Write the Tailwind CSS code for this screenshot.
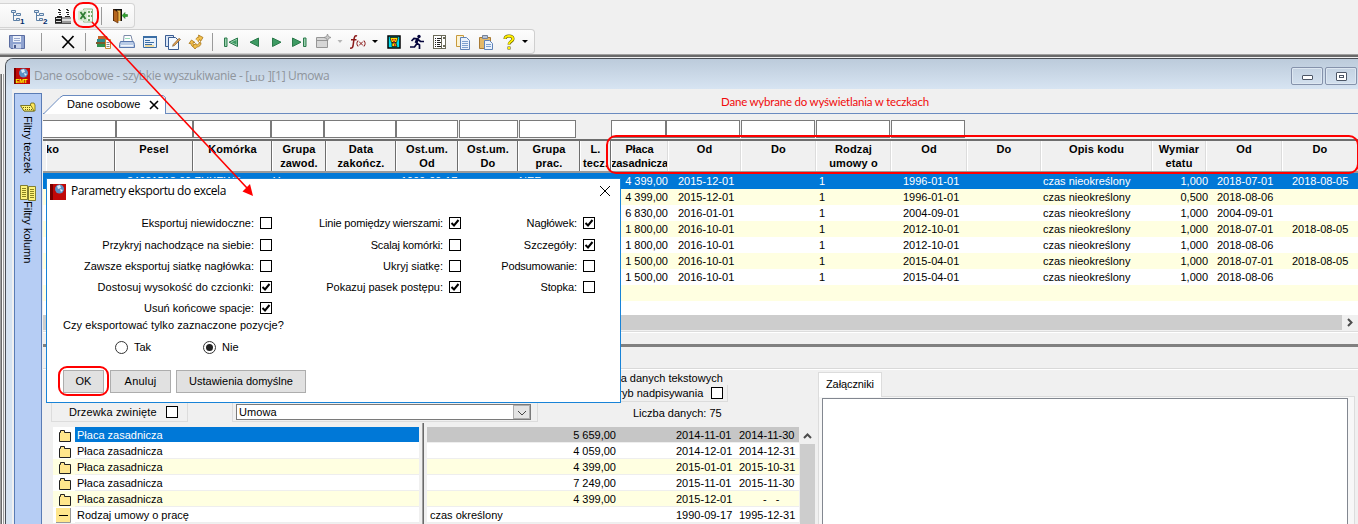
<!DOCTYPE html>
<html lang="pl">
<head>
    <meta charset="UTF-8">
    <meta name="viewport" content="width=device-width, initial-scale=1.0">
    <title>Dane osobowe - szybkie wyszukiwanie</title>
    <script src="https://cdn.jsdelivr.net/npm/@tailwindcss/browser@4"></script>
</head>
<body class="relative flex h-[524px] w-[1358px] flex-col overflow-hidden bg-[#f0f0f0] font-['Liberation_Sans',Arial,sans-serif] text-[11px] leading-4 text-black">

    <!-- Toolbars -->
    <header class="h-[54px] shrink-0 pt-[3px]">
        <div class="flex h-[25px] w-[135px] items-center rounded-r-sm border border-l-0 border-[#d4d4d4] bg-linear-to-b from-[#fdfdfd] to-[#f1f1f1] pl-[9px]">
            <svg class="h-4 w-4" viewBox="0 0 16 16" fill="none" stroke="#5b7fa6"><path d="M4.500 4v8.500H10M4.500 7.500H7"/><path d="M2.500 2.500h4v2h-4zM7.500 5.500h4v2h-4zM7.500 10.500h3v2h-3z" fill="#dce8f5"/><text x="11" y="15.500" font-size="8" font-weight="bold" fill="#002a6b" stroke="none">1</text></svg>
            <svg class="ml-[7px] h-4 w-4" viewBox="0 0 16 16" fill="none" stroke="#5b7fa6"><path d="M4.500 4v8.500H10M4.500 7.500H7"/><path d="M2.500 2.500h4v2h-4zM7.500 5.500h4v2h-4zM7.500 10.500h3v2h-3z" fill="#dce8f5"/><text x="11" y="15.500" font-size="8" font-weight="bold" fill="#002a6b" stroke="none">2</text></svg>
            <svg class="ml-[7px] h-4 w-4" viewBox="0 0 16 16" shape-rendering="crispEdges"><path fill="#fff" d="M2 0h5v9H2zM10 0h5v9h-5z"/><path fill="#222" d="M3 1h2v1H3zM4 2h2v1H4zM3 4h3v1H3zM4 6h2v1H4zM2 8h5v1H2zM11 1h2v1h-2zM12 2h2v1h-2zM11 4h3v1h-3zM12 6h2v1h-2zM10 8h5v1h-5zM0 9h7v6H0z"/><path fill="#999" d="M7 9h9v2H7zM7 13h9v2H7z"/><path fill="#ddd" d="M7 11h9v2H7zM1 10h5v1H1zM1 13h5v1H1z"/><path fill="#555" d="M0 15h16v1H0z"/></svg>
            <svg class="ml-[7px] h-4 w-4" viewBox="0 0 16 16"><path fill="#eef6ea" stroke="#8fb587" d="M5.500 1h9v13h-9z"/><path fill="#d6ead0" d="M0 3l9-2v13l-9-2z"/><path fill="#6fa968" d="M10 3h2v2h-2zM13 3h1v2h-1zM10 7h2v2h-2zM13 7h1v2h-1zM10 11h2v2h-2z"/><path fill="none" stroke="#2f7d33" stroke-width="1.800" d="M2.500 4l5 7M7.500 4l-5 7"/></svg>
            <span class="ml-[7px] h-[18px] w-px bg-[#9a9a9a]"></span>
            <svg class="ml-[10px] h-4 w-4" viewBox="0 0 16 16"><path fill="#111" d="M1 1h9v12H1z"/><path fill="#e9b54a" d="M5 2.500h3.500V13H5z"/><path fill="#b5651d" stroke="#5e2c04" stroke-width=".7" d="M1.500 1.500L6 4v11l-4.500-2.500z"/><path fill="#2fa52f" stroke="#176b17" stroke-width=".5" d="M10 7.500L13 4.500v2h2.500v2H13v2z"/></svg>
        </div>
        <div class="mt-px flex h-[25px] w-[535px] items-center rounded-r-sm border border-l-0 border-[#cfcfcf] bg-linear-to-b from-[#fdfdfd] to-[#f1f1f1] pl-[9px]">
            <svg class="h-4 w-4" viewBox="0 0 16 16"><path fill="#8fa3d0" stroke="#5a6ca0" d="M.500 1.500h15v13H2l-1.500-1.500z"/><path fill="#eef2fa" d="M4 2h8v6H4z"/><path fill="#c9d3ea" d="M4 10h8v4.500H4z"/><path fill="#4a5a8c" d="M5 11h2v3H5z"/><path stroke="#9aa9cc" d="M5 4.500h6M5 6.500h6"/></svg>
            <span class="ml-4 h-[18px] w-px bg-[#9a9a9a]"></span>
            <svg class="ml-[18px] h-4 w-4" viewBox="0 0 16 16" fill="none" stroke="#000" stroke-width="1.700"><path d="M2 2l12 12M13.500 2L2.500 14"/></svg>
            <span class="ml-[9px] h-[18px] w-px bg-[#9a9a9a]"></span>
            <svg class="ml-[10px] h-4 w-4" viewBox="0 0 16 16"><path fill="#c4652a" d="M2 2h9l1 3H2z"/><path fill="#2e8b8b" d="M1 5h10v3H1z"/><path fill="#7b5a2c" d="M0 8h10v2H0z"/><path fill="#2f8f4c" d="M1 10h9v3H1z"/><path fill="#fff" stroke="#c98a32" d="M9.500 5.500h5v9h-5z"/><path stroke="#888" d="M10.500 8.500h3M10.500 10.500h3M10.500 12.500h3"/></svg>
            <svg class="ml-[7px] h-4 w-4" viewBox="0 0 16 16"><path fill="#fff" stroke="#7c8ba8" d="M4.500 8L5 1.500h7l1.500 6"/><path fill="#b9cbe6" stroke="#5a78ae" d="M1.500 7.500h13l1 3v3h-15v-3z"/><path fill="#f0f4fb" d="M2 11h12v1.500H2z"/><path stroke="#9db" d="M6 4.500h5"/></svg>
            <svg class="ml-[7px] h-4 w-4" viewBox="0 0 16 16"><path fill="#e6f0fb" stroke="#3b6ea5" d="M1.500 2.500h13v11h-13z"/><path fill="#3b6ea5" d="M1 2h14v2H1z"/><path stroke="#3b6ea5" d="M3 6.500h5M3 8.500h9M3 10.500h7"/><path fill="#f4c542" d="M3 11.500h9v1H3z"/></svg>
            <svg class="ml-[7px] h-4 w-4" viewBox="0 0 16 16"><path fill="#dbe7f7" stroke="#3b5d93" d="M.500 1.500h8v11h-8z"/><path fill="#f6faff" stroke="#3b5d93" d="M3.500 3.500h7l3 3v9h-10z"/><path fill="#e0a052" stroke="#6b4a20" stroke-width=".6" d="M15.500 5.500l-6 6-2 .8.800-2 5.700-6z"/></svg>
            <svg class="ml-[7px] h-4 w-4" viewBox="0 0 16 16" fill="#f2c14e" stroke="#a87414" stroke-width=".8" stroke-linejoin="round"><path d="M8 5.500C8.500 3.500 9.500 3 11 3L10.500 1 15 3.500 12.500 7.500 12 5.700C11 5.700 10.500 6.500 10.300 8"/><path d="M1 9.500L3.500 6 7 8.500 5 8.700C5 10.500 5.500 11 7 11.200L6.300 13C3.500 12.500 3 11 2.900 9.300z"/><path d="M7 15l-2.500-3L8 9.500l.3 1.500c2-.2 2.700-1 2.700-2.500l2 .3c0 2.500-1.500 4-4.300 4.300z"/></svg>
            <span class="ml-2 h-[18px] w-px bg-[#9a9a9a]"></span>
            <svg class="ml-[10px] h-4 w-4" viewBox="0 0 16 16"><path fill="#9ad0ae" stroke="#2b7a4b" d="M1.500 4h2.500v8.500H1.500zM14.500 4v8.500L6 8.200z"/><path fill="#3d9a63" d="M13.500 6v4.500L8.500 8.200z"/></svg>
            <svg class="ml-[7px] h-4 w-4" viewBox="0 0 16 16"><path fill="#3d9a63" stroke="#2b7a4b" d="M12.500 4v8.500L4 8.200z"/></svg>
            <svg class="ml-[7px] h-4 w-4" viewBox="0 0 16 16"><path fill="#3d9a63" stroke="#2b7a4b" d="M3.500 4v8.500L12 8.200z"/></svg>
            <svg class="ml-[7px] h-4 w-4" viewBox="0 0 16 16"><path fill="#3d9a63" stroke="#2b7a4b" d="M.500 4v8.500L9 8.200z"/><path fill="#9ad0ae" stroke="#2b7a4b" d="M11.500 4H14v8.500h-2.500z"/></svg>
            <svg class="ml-[7px] h-4 w-4" viewBox="0 0 16 16"><path fill="#d6d6d6" stroke="#969696" d="M1.500 3.500h11v10h-11z"/><path stroke="#969696" d="M2 6.500h10"/><path fill="#c9c9c9" stroke="#8a8a8a" stroke-width=".7" d="M12.500 0l1 2.500L16 3.500l-2.500 1-1 2.500-1-2.500L9 3.500l2.500-1z"/></svg>
            <svg class="ml-[5px] h-4 w-2" viewBox="0 0 8 16"><path fill="#b5b5b5" d="M1.500 6h5L4 9z"/></svg>
            <svg class="ml-[6px] h-4 w-4" viewBox="0 0 16 16" fill="none" stroke="#8b1a1a"><path stroke-width="1.500" d="M7 2C5 1 4.500 2.500 4 5L3 12c-.5 2-1.500 2.500-3 2M1 5.800h5.500"/><path d="M8 6.500c-1.500 2-1.500 4 0 6M14 6.500c1.500 2 1.500 4 0 6M9 7.500l4 4M13 7.500l-4 4"/></svg>
            <svg class="ml-[5px] h-4 w-2" viewBox="0 0 8 16"><path fill="#000" d="M1 6h6L4 9z"/></svg>
            <svg class="ml-[7px] h-4 w-4" viewBox="0 0 16 16"><path fill="#00e0f0" stroke="#000" stroke-width="1.500" d="M2 2h12v12H2z"/><path fill="#ffe000" stroke="#000" stroke-width=".7" d="M4 3.500h8l-1.500 5h-5zM6 9h4l1 3.500H6z"/><path fill="#d02020" d="M6 5h1.500v1.500H6zM8.500 5H10v1.500H8.500zM7 7h2v1.500H7zM8 10h1.500v2H8z"/></svg>
            <svg class="ml-[7px] h-4 w-4" viewBox="0 0 16 16" fill="none" stroke="#05053c" stroke-width="1.700"><circle cx="10" cy="2.500" r="1.700" fill="#05053c" stroke="none"/><path d="M2.500 7L5 4.500l4 .5-1.500 4 3 2v4M8 9.500L5.500 13H1M9 5.500l2.500 2H15"/><path stroke-width="3" d="M8.500 5L7 9"/></svg>
            <svg class="ml-[7px] h-4 w-4" viewBox="0 0 16 16" shape-rendering="crispEdges"><path fill="#fff" stroke="#6b6b5a" d="M1.500 1.500h8v13h-8zM9.500 1.500h4v13h-4z"/><path stroke="#222" d="M3 4.500h1M5 4.500h4M3 6.500h1M5 6.500h3M3 8.500h1M5 8.500h4M3 10.500h1M5 10.500h3M3 12.500h1M5 12.500h4"/><path fill="#6b6b5a" d="M11 3h2v2h-2zM11 11h2v2h-2z"/></svg>
            <svg class="ml-[7px] h-4 w-4" viewBox="0 0 16 16"><path fill="#fdf3d3" stroke="#c79a3c" d="M1.500 1.500h7v11h-7z"/><path fill="#eaf2fd" stroke="#5f83b8" d="M5.500 3.500h6l3 3v9h-9z"/><path stroke="#7da0cf" d="M7 7.500h6M7 9.500h6M7 11.500h6M7 13.500h6"/></svg>
            <svg class="ml-[7px] h-4 w-4" viewBox="0 0 16 16"><path fill="#e3b868" stroke="#a87a34" d="M1.500 3.500h11v11h-11z"/><path fill="#b9c4d6" stroke="#76839a" d="M4.500 1.500h5v3h-5z"/><path fill="#eaf2fd" stroke="#5f83b8" d="M6.500 6.500h5l3 3v6h-8z"/><path stroke="#7da0cf" d="M8 10.500h5M8 12.500h5"/></svg>
            <svg class="ml-[7px] h-4 w-4" viewBox="0 0 16 16" fill="none"><path stroke="#5e5a00" stroke-width="3" d="M4 5c0-4 8-4 8 0 0 2.500-4 2.500-4 5.500M8 12.500v3"/><path stroke="#ffee00" stroke-width="2" d="M4 4.700c0-3.500 8-3.500 8 .3 0 2.300-4 2.300-4 5.200M8 12.900v2.200"/></svg>
            <svg class="ml-1 h-4 w-2" viewBox="0 0 8 16"><path fill="#000" d="M1 6h6L4 9z"/></svg>
        </div>
    </header>

    <div class="h-px shrink-0 bg-[#a0a0a0]"></div>
    <div class="h-0.5 shrink-0 bg-[#696969]"></div>
    <div class="h-px shrink-0 bg-[#f0f0f0]"></div>

    <div class="flex min-h-0 flex-1">
        <!-- MDI frame edge -->
        <div class="flex w-[5px] shrink-0 pt-4">
            <span class="w-px bg-[#a0a0a0]"></span>
            <span class="w-px bg-[#696969]"></span>
            <span class="w-px bg-white"></span>
            <span class="w-px bg-[#a0a0a0]"></span>
        </div>

        <!-- Child window -->
        <section class="flex min-w-0 flex-1 flex-col overflow-hidden rounded-tl-lg border-t border-l border-[#4a4f57] bg-[#d7e4f2]">
            <div class="flex h-[30px] shrink-0 items-center bg-linear-to-b from-[#bccbdb] to-[#d7e4f2] pt-1 pl-2">
                <svg class="h-4 w-4" viewBox="0 0 16 16"><path fill="#c00808" d="M0 0h16v16H0z"/><path fill="#700" d="M0 0h2v16H0z"/><circle cx="9.500" cy="5" r="4.500" fill="#5b8fc4"/><path fill="#dceaf7" d="M7 2l3-1 1 3-3 1zM10 5l3 1-2 2z"/><text x="1.500" y="15" font-size="6" font-weight="bold" fill="#ff0" textLength="12">EMT</text></svg>
                <div class="ml-1 flex font-['Open_Sans',sans-serif] text-[12px] tracking-[-0.33px] whitespace-pre text-[#8f959c]">Dane osobowe - szybkie wyszukiwanie - [<span class="flex h-4 w-[19px] items-end overflow-hidden"><span class="h-[9px] overflow-hidden leading-[3px]">Lib</span></span>][1] Umowa</div>
                <div class="ml-auto flex gap-0.5 pr-[1px]">
                    <div class="flex h-[18px] w-8 items-center justify-center rounded-xs border border-[#8592ab] pt-0.5 shadow-[inset_0_0_0_1px_#dde7f1]"><span class="h-[5px] w-[11px] rounded-[1px] border border-[#4c5666] bg-white"></span></div>
                    <div class="flex h-[18px] w-8 items-center justify-center rounded-xs border border-[#8592ab] shadow-[inset_0_0_0_1px_#dde7f1]"><span class="flex h-[9px] w-[11px] items-center justify-center rounded-[1px] border border-[#4c5666] bg-white"><span class="h-[3px] w-[5px] border border-[#4c5666]"></span></span></div>
                </div>
            </div>

            <div class="ml-1.5 flex min-h-0 flex-1 bg-[#f0f0f0] pl-0.5">
                <!-- Filter side tabs -->
                <aside class="mt-1 flex w-7 shrink-0 flex-col items-center border border-b-0 border-[#5a7cb5] bg-[#b6cdf4] pt-1">
                    <svg class="h-4 w-4" viewBox="0 0 16 16"><path fill="#ffe75a" stroke="#6b6410" stroke-width=".8" d="M4 13L1 8h9l1-3h3l1 2v6z"/><path fill="#fff37a" stroke="#6b6410" stroke-width=".8" d="M.500 7.500h10.500l3 5.500H4z"/><path stroke="#6b6410" stroke-dasharray="1 1" d="M3 9.500h8M5 11.500h8"/></svg>
                    <span class="mt-0.5 h-[58px] text-[11px] tracking-[-0.1px] whitespace-nowrap [writing-mode:vertical-rl]">Filtry teczek</span>
                    <svg class="mt-[11px] h-4 w-4" viewBox="0 0 16 16"><path fill="#fff37a" stroke="#6b6410" stroke-width=".8" d="M.500.500h7v14h-7zM8.500 1.500h7v14h-7z"/><path stroke="#8b8420" d="M2 3.500h4M2 5.500h4M2 7.500h4M2 9.500h4M2 11.500h4M10 4.500h4M10 6.500h4M10 8.500h4M10 10.500h4M10 12.500h4"/></svg>
                    <span class="text-[11px] whitespace-nowrap [writing-mode:vertical-rl]">Filtry kolumn</span>
                </aside>

                <main class="ml-px flex min-w-0 flex-1 flex-col">
                    <!-- Tab strip -->
                    <div class="relative flex h-[25px] shrink-0 items-end border-b border-[#6a8bc0]">
                        <svg class="absolute top-1.5 left-0 h-[19px] w-[123px]" viewBox="0 0 123 19"><path fill="#fff" stroke="#6a8bc0" d="M0 19.500L2.500 17 17 2.500 20 .500h100l2.500 2v17"/></svg>
                        <span class="relative mb-px ml-6">Dane osobowe</span>
                        <svg class="relative mb-[3px] ml-[9px] h-2.5 w-2.5" viewBox="0 0 10 10" stroke="#000" stroke-width="1.600"><path d="M1 1l8 8M9 1L1 9"/></svg>
                    </div>

                    <!-- Quick search fields -->
                    <div id="filters" class="mt-1.5 flex h-[18px] shrink-0"></div>
                    <div id="head" class="mt-px flex h-[34px] shrink-0 border-t-2 border-b-2 border-[#6d6d6d] border-b-[#9a9a9a] pl-[3px]"></div>
                    <div id="rows" class="shrink-0 bg-white pb-3.5"></div>

                    <div class="flex h-[15px] shrink-0">
                        <div class="flex-1 bg-[#cdcdcd]"></div>
                        <svg class="h-[15px] w-4" viewBox="0 0 16 15" fill="none" stroke="#4d4d4d" stroke-width="2"><path d="M6 4l3.500 3.500L6 11"/></svg>
                    </div>
                    <div class="mt-px h-0.5 shrink-0 border-t border-[#dcdcdc] bg-white"></div>
                    <div class="mt-[11px] h-[3px] shrink-0 bg-[#808080]"></div>
                    <div class="mt-[21px] h-0.5 shrink-0 border-t border-[#d9d9d9] bg-white"></div>

                    <!-- Details -->
                    <div class="flex min-h-0 flex-1">
                        <div class="flex w-[773px] shrink-0 flex-col pl-2">
                            <div class="flex h-[57px] items-end">
                                <div class="mb-[5px] flex h-5 w-[137px] items-center border border-t-0 border-[#dcdcdc] pl-[17px] tracking-[0.13px]">Drzewka zwinięte<span class="ml-[9px] h-3 w-3 border border-black bg-white"></span></div>
                                <div class="mb-[5px] ml-[44px] flex h-5 w-[306px] items-center border border-t-0 border-[#dcdcdc] pl-[3px]">
                                    <div class="flex h-4 w-[295px] items-center border border-[#7a7a7a] bg-white pl-0.5 tracking-[0.1px]">Umowa<span class="ml-auto flex h-[14px] w-[17px] items-center justify-center border border-[#adadad] bg-[#e3e3e3]"><svg class="h-2 w-2" viewBox="0 0 8 8" fill="none" stroke="#444"><path d="M0 3l4 4 4-4"/></svg></span></div>
                                </div>
                                <div class="ml-auto flex h-full w-[234px] flex-col">
                                    <div class="h-4 pl-[13px] whitespace-nowrap">Cecha danych tekstowych</div>
                                    <div class="mt-[-1px] flex h-[17px] w-[146px] items-center border-r border-b border-[#dcdcdc] pl-[30px] whitespace-nowrap">Tryb nadpisywania<span class="mr-1 ml-auto h-3 w-3 shrink-0 border border-black bg-white"></span></div>
                                    <div class="mt-[3px] h-4 pl-[51px]">Liczba danych: 75</div>
                                </div>
                            </div>
                            <div class="flex min-h-0 flex-1 pl-0.5">
                                <div id="tree" class="w-[366px] shrink-0"></div>
                                <div class="-mt-1 ml-[3px] w-[2px] border-l border-[#a0a0a0] bg-[#696969]"></div>
                                <div id="values" class="ml-[3px] w-[372px] shrink-0"></div>
                                <div class="ml-px flex w-[15px] flex-col">
                                    <svg class="h-[17px] w-[15px] shrink-0" viewBox="0 0 15 17" fill="none" stroke="#4d4d4d" stroke-width="2"><path d="M4 11l3.500-3.500L11 11"/></svg>
                                    <div class="flex-1 bg-[#cdcdcd]"></div>
                                </div>
                            </div>
                        </div>

                        <div class="ml-0.5 flex w-[537px] flex-col pt-0.5">
                            <div class="flex h-[25px] shrink-0">
                                <div class="flex w-16 items-center border border-b-0 border-[#dcdcdc] bg-white pb-[3px] pl-[7px] tracking-[-0.1px] whitespace-nowrap">Załączniki</div>
                                <div class="flex-1 border-b border-[#dcdcdc]"></div>
                            </div>
                            <div class="flex-1 border-x border-[#dcdcdc] bg-[#f7f7f7] pt-px pr-1.5 pl-[3px]">
                                <div class="h-full border border-b-0 border-[#828790] bg-white"></div>
                            </div>
                        </div>
                    </div>
                </main>
            </div>
        </section>
    </div>

    <!-- Export dialog -->
    <div class="absolute top-[178px] left-[46px] flex h-[225px] w-[575px] flex-col border border-[#1883d7] bg-white">
        <div class="flex h-6 items-center pl-[3px]">
            <svg class="mt-px h-4 w-4" viewBox="0 0 16 16"><path fill="#c00808" d="M0 0h16v16H0z"/><path fill="#700" d="M0 0h3v16H0z"/><circle cx="9.500" cy="5" r="4.500" fill="#5b8fc4"/><path fill="#dceaf7" d="M7 2l3-1 1 3-3 1zM10 5l3 1-2 2z"/></svg>
            <span class="ml-[5px] font-['Open_Sans',sans-serif] text-[12px] tracking-[-0.45px]">Parametry eksportu do excela</span>
            <svg class="mr-[10px] ml-auto h-2.5 w-2.5" viewBox="0 0 10 10" stroke="#000"><path d="M0 0l10 10M10 0L0 10"/></svg>
        </div>
        <div id="options" class="mt-2 flex h-[108px] shrink-0"></div>
        <div class="mt-[-2px] h-4 pl-4 tracking-[0.08px]">Czy eksportować tylko zaznaczone pozycje?</div>
        <div class="mt-[6px] flex h-4 items-center pl-[68px]">
            <span class="h-[13px] w-[13px] rounded-full border border-[#333]"></span>
            <span class="ml-1.5 w-[69px]">Tak</span>
            <span class="flex h-[13px] w-[13px] items-center justify-center rounded-full border border-[#333]"><span class="h-[7px] w-[7px] rounded-full bg-[#222]"></span></span>
            <span class="ml-1.5">Nie</span>
        </div>
        <div class="mt-[15px] flex h-[23px] pl-4 leading-[19px]">
            <button class="w-[41px] border border-[#adadad] bg-[#e1e1e1]">OK</button>
            <button class="ml-1.5 w-[61px] border border-[#adadad] bg-[#e1e1e1] tracking-[0.2px]">Anuluj</button>
            <button class="ml-[5px] w-[130px] border border-[#adadad] bg-[#e1e1e1]">Ustawienia domyślne</button>
        </div>
    </div>

    <!-- Red callouts -->
    <div class="absolute top-[94px] left-[721px] font-['Lato',sans-serif] text-[11.5px] tracking-[-0.2px] whitespace-nowrap text-[#f00a0a]">Dane wybrane do wyświetlania w teczkach</div>
    <svg class="pointer-events-none absolute inset-0 h-[524px] w-[1358px]" viewBox="0 0 1358 524" fill="none" stroke="#ff0000" stroke-width="2">
        <rect x="74" y="3" width="24" height="24" rx="9"/>
        <rect x="607" y="136" width="751" height="37" rx="9"/>
        <rect x="59" y="367" width="49" height="28" rx="8"/>
        <path stroke-width="1.600" d="M92 22L247 188"/>
        <path fill="#ff0000" stroke="none" d="M253 196l-10.500-4.500 7.500-7.500z"/>
    </svg>

    <script>
        // [left margin, width] of every search field
        const filters = [[0, 73], [0, 77], [0, 78], [0, 53], [0, 72], [0, 62], [1, 59], [1, 57], [35, 55], [0, 74], [1, 74], [1, 74], [1, 74]];
        document.getElementById('filters').innerHTML = filters.map(([gap, width], i) => `
            <div class="shrink-0 border border-[#7a7a7a] bg-white ${i === 0 ? 'border-l-0' : ''}" style="margin-left:${gap}px;width:${width}px"></div>
        `).join('');

        const columns = [
            ['ko', 69], ['Pesel', 78], ['Komórka', 79], ['Grupa<br>zawod.', 54], ['Data<br>zakończ.', 70], ['Ost.um.<br>Od', 62],
            ['Ost.um.<br>Do', 60], ['Grupa<br>prac.', 62], ['L.<br>tecz.', 31], ['Płaca<br>zasadnicza', 57], ['Od', 73], ['Do', 75],
            ['Rodzaj<br>umowy o', 75], ['Od', 76], ['Do', 74], ['Opis kodu', 111], ['Wymiar<br>etatu', 54], ['Od', 76], ['Do', 76]
        ];
        document.getElementById('head').innerHTML = columns.map(([title, width], i) => `
            <div class="flex shrink-0 justify-center overflow-hidden border-r border-l border-l-white pt-[1px] leading-[14px] font-bold ${i === 9 ? 'tracking-[-0.1px]' : 'tracking-[0.15px]'} ${i < 9 ? 'border-r-[#6d6d6d]' : 'border-r-[#dcdcdc]'}" style="width:${width}px">
                <span class="text-center whitespace-nowrap ${i === 0 ? '-ml-14' : ''}">${title}</span>
            </div>
        `).join('');

        const rows = [
            ['4 399,00', '2015-12-01', '1', '1996-01-01', '1,000', '2018-07-01', '2018-08-05'],
            ['4 399,00', '2015-12-01', '1', '1996-01-01', '0,500', '2018-08-06', ''],
            ['6 830,00', '2016-01-01', '1', '2004-09-01', '1,000', '2004-09-01', ''],
            ['1 800,00', '2016-10-01', '1', '2012-10-01', '1,000', '2018-07-01', '2018-08-05'],
            ['1 800,00', '2016-10-01', '1', '2012-10-01', '1,000', '2018-08-06', ''],
            ['1 500,00', '2016-10-01', '1', '2015-04-01', '1,000', '2018-07-01', '2018-08-05'],
            ['1 500,00', '2016-10-01', '1', '2015-04-01', '1,000', '2018-08-06', ''],
            null
        ];
        document.getElementById('rows').innerHTML = rows.map((r, i) => {
            const tone = i === 0 ? 'bg-[#0078d7] text-white' : i % 2 ? 'bg-[#ffffe1]' : 'bg-white';
            if (!r) return `<div class="h-4 ${tone}"></div>`;
            const person = i === 0 ? ['84031518 60 ZUKEWS', 'Y', '1999-09-17', 'NEF'] : ['', '', '', ''];
            return `
                <div class="grid h-4 grid-cols-[84px_146px_128px_118px_84px_65px_10px_141px_84px_140px_109px_56px_9px_75px_66px] whitespace-nowrap ${tone}">
                    <span></span><span>${person[0]}</span><span>${person[1]}</span><span>${person[2]}</span><span>${person[3]}</span>
                    <span class="text-right">${r[0]}</span><span></span>
                    <span>${r[1]}</span><span>${r[2]}</span><span>${r[3]}</span><span>czas nieokreślony</span>
                    <span class="text-right">${r[4]}</span><span></span><span>${r[5]}</span><span>${r[6]}</span>
                </div>`;
        }).join('');

        const tree = ['Płaca zasadnicza', 'Płaca zasadnicza', 'Płaca zasadnicza', 'Płaca zasadnicza', 'Płaca zasadnicza', 'Rodzaj umowy o pracę'];
        const folder = '<svg class="ml-[6px] mt-px h-3 w-3 shrink-0" viewBox="0 0 12 12"><path fill="#ffe68c" stroke="#222" d="M.500 11.500v-9h1v-2h4v2h6v9z"/></svg>';
        const minus = '<svg class="ml-[3px] h-[15px] w-[15px] shrink-0" viewBox="0 0 15 15"><path fill="#ffe68c" d="M0 0h14v14H0z"/><path fill="none" stroke="#999" d="M0 14.500h14.500V0"/><path stroke="#000" d="M3 7.500h9"/></svg>';
        document.getElementById('tree').innerHTML = tree.map((name, i) => `
            <div class="flex h-4 items-center ${i % 2 === 0 && i ? 'bg-[#ffffe1]' : 'bg-white'}">
                <div class="flex w-[22px] shrink-0">${i < 5 ? folder : minus}</div>
                <span class="h-4 flex-1 border-b pl-0.5 leading-4 ${i === 0 ? 'border-white bg-[#0078d7] text-white' : 'border-[#eeeeee]'}">${name}</span>
            </div>
        `).join('');

        const values = [
            ['', '5 659,00', '2014-11-01', '2014-11-30'],
            ['', '4 059,00', '2014-12-01', '2014-12-31'],
            ['', '4 399,00', '2015-01-01', '2015-10-31'],
            ['', '7 249,00', '2015-11-01', '2015-11-30'],
            ['', '4 399,00', '2015-12-01', '- &nbsp; -'],
            ['czas określony', '', '1990-09-17', '1995-12-31']
        ];
        document.getElementById('values').innerHTML = values.map((v, i) => `
            <div class="grid h-4 grid-cols-[100px_86px_60px_63px_60px] border-b border-[#eeeeee] pl-[3px] ${i === 0 ? 'bg-[#c6c6c6]' : i === 2 || i === 4 ? 'bg-[#ffffe1]' : 'bg-white'}">
                <span>${v[0]}</span><span class="text-right">${v[1]}</span><span></span><span>${v[2]}</span><span class="${i === 4 ? 'pl-6' : ''}">${v[3]}</span>
            </div>
        `).join('');

        // Option columns: width in pixels, then [label, checked, letter spacing]
        const options = [
            [225, [['Eksportuj niewidoczne:', 0, 0], ['Przykryj nachodzące na siebie:', 0, 0], ['Zawsze eksportuj siatkę nagłówka:', 0, 0], ['Dostosuj wysokość do czcionki:', 1, 0.08], ['Usuń końcowe spacje:', 1, 0]]],
            [189, [['Linie pomiędzy wierszami:', 1, -0.18], ['Scalaj komórki:', 0, -0.15], ['Ukryj siatkę:', 0, 0], ['Pokazuj pasek postępu:', 1, 0]]],
            [134, [['Nagłówek:', 1, -0.1], ['Szczegóły:', 1, 0], ['Podsumowanie:', 0, -0.2], ['Stopka:', 0, -0.1]]]
        ];
        const tick = '<svg class="h-2.5 w-2.5" viewBox="0 0 10 10" fill="none" stroke="#000" stroke-width="2"><path d="M1.500 5L4 7.500 8.500 2"/></svg>';
        document.getElementById('options').innerHTML = options.map(([width, items]) => `
            <div class="flex shrink-0 flex-col" style="width:${width}px">
                ${items.map(([label, on, spacing], i) => `
                    <div class="flex items-center justify-end gap-1.5 whitespace-nowrap ${i === 0 ? 'h-[23px]' : 'h-[21px]'}">
                        <span style="letter-spacing:${spacing}px">${label}</span>
                        <span class="flex h-3 w-3 items-center justify-center border border-black bg-white">${on ? tick : ''}</span>
                    </div>`).join('')}
            </div>
        `).join('');
    </script>
</body>
</html>
